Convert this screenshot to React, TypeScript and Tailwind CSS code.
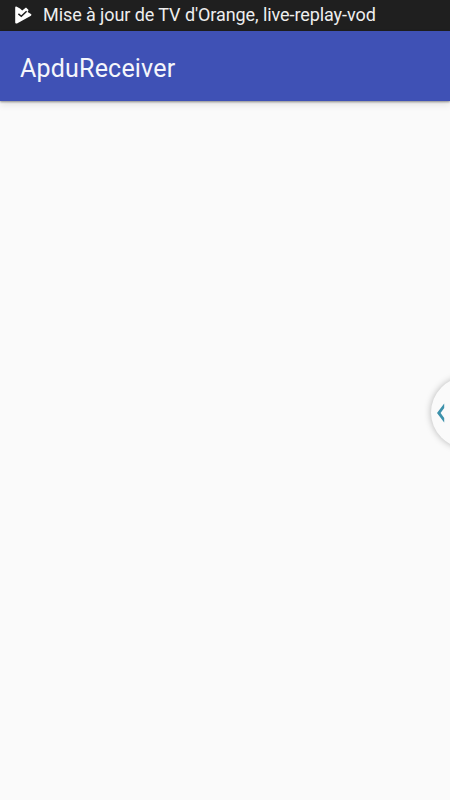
function UpdateIcon() {
  return (
    <svg className="h-[18px] w-[17px] shrink-0" viewBox="0 0 17 18" aria-hidden="true">
      <path
        d="M1.3.5 5 2.5 7.2 4.6 11 1.4 13.6 4 12.6 6 16 8.1Q16.9 8.9 16 9.7L2 17.4Q.2 18 .2 16.5V1.4Q.3.2 1.3.5Z"
        fill="#fff"
      />
      <path d="M3.4 7.9 6.3 10.3 11.6 5.2" fill="none" stroke="#1f1f1f" strokeWidth="1.5" />
    </svg>
  );
}

function StatusBar() {
  return (
    <div className="flex h-[31px] items-start bg-[#1f1f1f] pl-[15px]">
      <div className="pt-1.5">
        <UpdateIcon />
      </div>
      <span className="ml-[11px] whitespace-nowrap text-[18px] leading-[30px] tracking-[-0.08px] text-[#eeeeee]">
        Mise à jour de TV d'Orange, live-replay-vod
      </span>
    </div>
  );
}

function Toolbar({ title }: { title: string }) {
  return (
    <header className="flex h-[70px] items-center bg-[#3f51b5] pl-5 pt-[5px] shadow-[0_1px_2px_rgba(0,0,0,0.4),0_4px_7px_rgba(0,0,0,0.09)]">
      <h1 className="text-[25px] font-normal leading-[30px] tracking-[0.2px] text-[#f5f6fb]">{title}</h1>
    </header>
  );
}

function EdgeHandle() {
  return (
    <button
      type="button"
      aria-label="Open side panel"
      className="absolute left-[431px] top-[377px] flex h-[71px] w-[71px] items-center rounded-full bg-[#fafafa] pl-1.5 shadow-[0_0_7px_rgba(0,0,0,0.28)]"
    >
      <svg className="h-5 w-2" viewBox="0 0 8 20" aria-hidden="true">
        <path d="M7.2.5V5L3.6 10 7.2 15V19.5L0 10Z" fill="#3d91ab" />
      </svg>
    </button>
  );
}

export default function App() {
  return (
    <div className="relative h-[800px] w-[450px] overflow-hidden bg-[#fafafa] font-[Roboto,sans-serif]">
      <StatusBar />
      <Toolbar title="ApduReceiver" />
      <EdgeHandle />
    </div>
  );
}
